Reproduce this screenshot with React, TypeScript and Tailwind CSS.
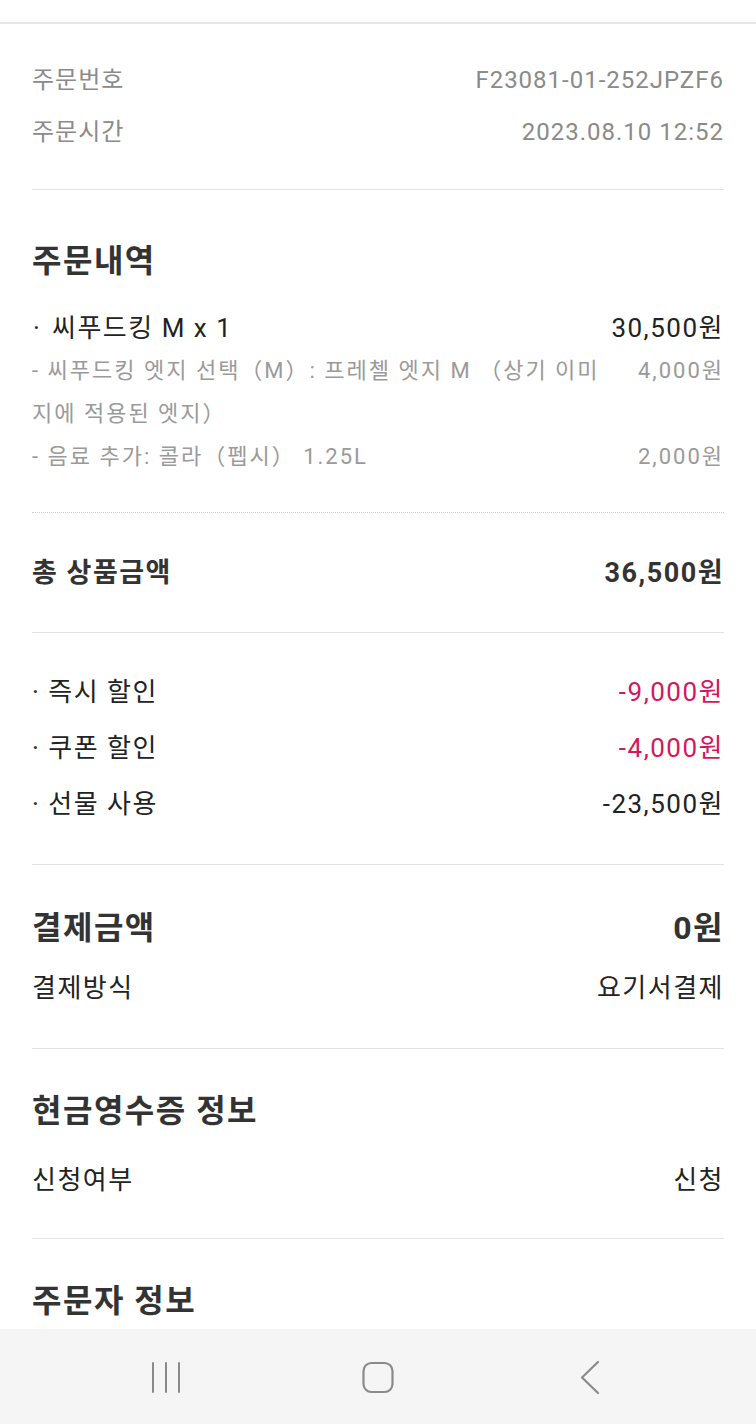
import type { ReactNode } from "react";

/* Order detail screen — receipt-style rows grouped by dividers */

const font = { fontFamily: '"Roboto", "Noto Sans CJK KR", sans-serif' };

function Row({
  label,
  value,
  className = "",
}: {
  label: ReactNode;
  value: ReactNode;
  className?: string;
}) {
  return (
    <div className={`flex items-center justify-between ${className}`}>
      <span>{label}</span>
      <span>{value}</span>
    </div>
  );
}

function Divider() {
  return <div className="h-px bg-[#e3e3e3]" />;
}

function NavBar() {
  return (
    <div className="flex h-[95px] shrink-0 items-center justify-center gap-[172px] bg-[#f5f5f5]">
      <svg width="40" height="40" viewBox="0 0 40 40" fill="none" stroke="#8a8a8a" strokeWidth="2" strokeLinecap="round">
        <path d="M7 6v29M20 6v29M33 6v29" />
      </svg>
      <svg width="40" height="40" viewBox="0 0 40 40" fill="none" stroke="#8a8a8a" strokeWidth="2.2">
        <rect x="5.5" y="6" width="29" height="29" rx="8" />
      </svg>
      <svg width="40" height="40" viewBox="0 0 40 40" fill="none" stroke="#8a8a8a" strokeWidth="2.2" strokeLinecap="round" strokeLinejoin="round">
        <path d="M28 5L12 20.5 28 36" />
      </svg>
    </div>
  );
}

export default function App() {
  return (
    <div className="flex h-[1424px] w-[756px] flex-col bg-white" style={font}>
      <div className="min-h-0 flex-1 overflow-hidden">
        <div className="h-[22px]" />
        <div className="h-[2px] bg-[#e6e6e6]" />

        <div className="px-8">
          {/* Order meta */}
          <div className="pt-[30px] pb-[31px] text-[24px] tracking-[1px] text-[#8a8a8a]">
            <Row className="h-[52px]" label="주문번호" value="F23081-01-252JPZF6" />
            <Row className="h-[52px]" label="주문시간" value="2023.08.10 12:52" />
          </div>
          <Divider />

          {/* Order items */}
          <div className="pt-[51px] pb-[34px]">
            <h2 className="h-[40px] text-[32px] leading-[40px] font-bold tracking-[1.5px] text-[#333]">주문내역</h2>
            <Row
              className="mt-[26px] h-[42px] text-[26px] tracking-[1.5px] text-[#222]"
              label={
                <>
                  <span className="inline-block w-[20px] pl-[1px]">·</span>씨푸드킹 M x 1
                </>
              }
              value="30,500원"
            />
            <div className="flex items-start justify-between text-[22px] leading-[43px] tracking-[2px] text-[#9a9a9a]">
              <span className="w-[580px]">
                - 씨푸드킹 엣지 선택（M）: 프레첼 엣지 M （상기 이미지에 적용된 엣지）
              </span>
              <span>4,000원</span>
            </div>
            <Row
              className="h-[43px] text-[22px] tracking-[2px] text-[#9a9a9a]"
              label="- 음료 추가: 콜라（펩시） 1.25L"
              value="2,000원"
            />
          </div>
          <div className="border-t border-dotted border-[#d0d0d0]" />

          {/* Subtotal */}
          <div className="pt-[40px] pb-[39px]">
            <Row
              className="h-[40px] text-[27px] font-bold tracking-[1.5px] text-[#333]"
              label="총 상품금액"
              value="36,500원"
            />
          </div>
          <Divider />

          {/* Discounts */}
          <div className="pt-[31px] pb-[32px] text-[26px] tracking-[1.5px] text-[#222]">
            <Row
              className="h-[56px]"
              label={<>· 즉시 할인</>}
              value={<span className="text-[#d4175c]">-9,000원</span>}
            />
            <Row
              className="h-[56px]"
              label={<>· 쿠폰 할인</>}
              value={<span className="text-[#d4175c]">-4,000원</span>}
            />
            <Row className="h-[56px]" label={<>· 선물 사용</>} value="-23,500원" />
          </div>
          <Divider />

          {/* Payment */}
          <div className="pt-[43px] pb-[38px]">
            <Row
              className="h-[40px] text-[32px] font-bold tracking-[1.5px] text-[#333]"
              label="결제금액"
              value="0원"
            />
            <Row
              className="mt-[18px] h-[44px] text-[26px] tracking-[1.5px] text-[#222]"
              label="결제방식"
              value="요기서결제"
            />
          </div>
          <Divider />

          {/* Cash receipt */}
          <div className="pt-[42px] pb-[36px]">
            <h2 className="h-[40px] text-[32px] leading-[40px] font-bold tracking-[1.5px] text-[#333]">
              현금영수증 정보
            </h2>
            <Row
              className="mt-[27px] h-[44px] text-[26px] tracking-[1.5px] text-[#222]"
              label="신청여부"
              value="신청"
            />
          </div>
          <Divider />

          {/* Orderer */}
          <div className="pt-[42px]">
            <h2 className="h-[40px] text-[32px] leading-[40px] font-bold tracking-[1.5px] text-[#333]">주문자 정보</h2>
          </div>
        </div>
      </div>
      <NavBar />
    </div>
  );
}
